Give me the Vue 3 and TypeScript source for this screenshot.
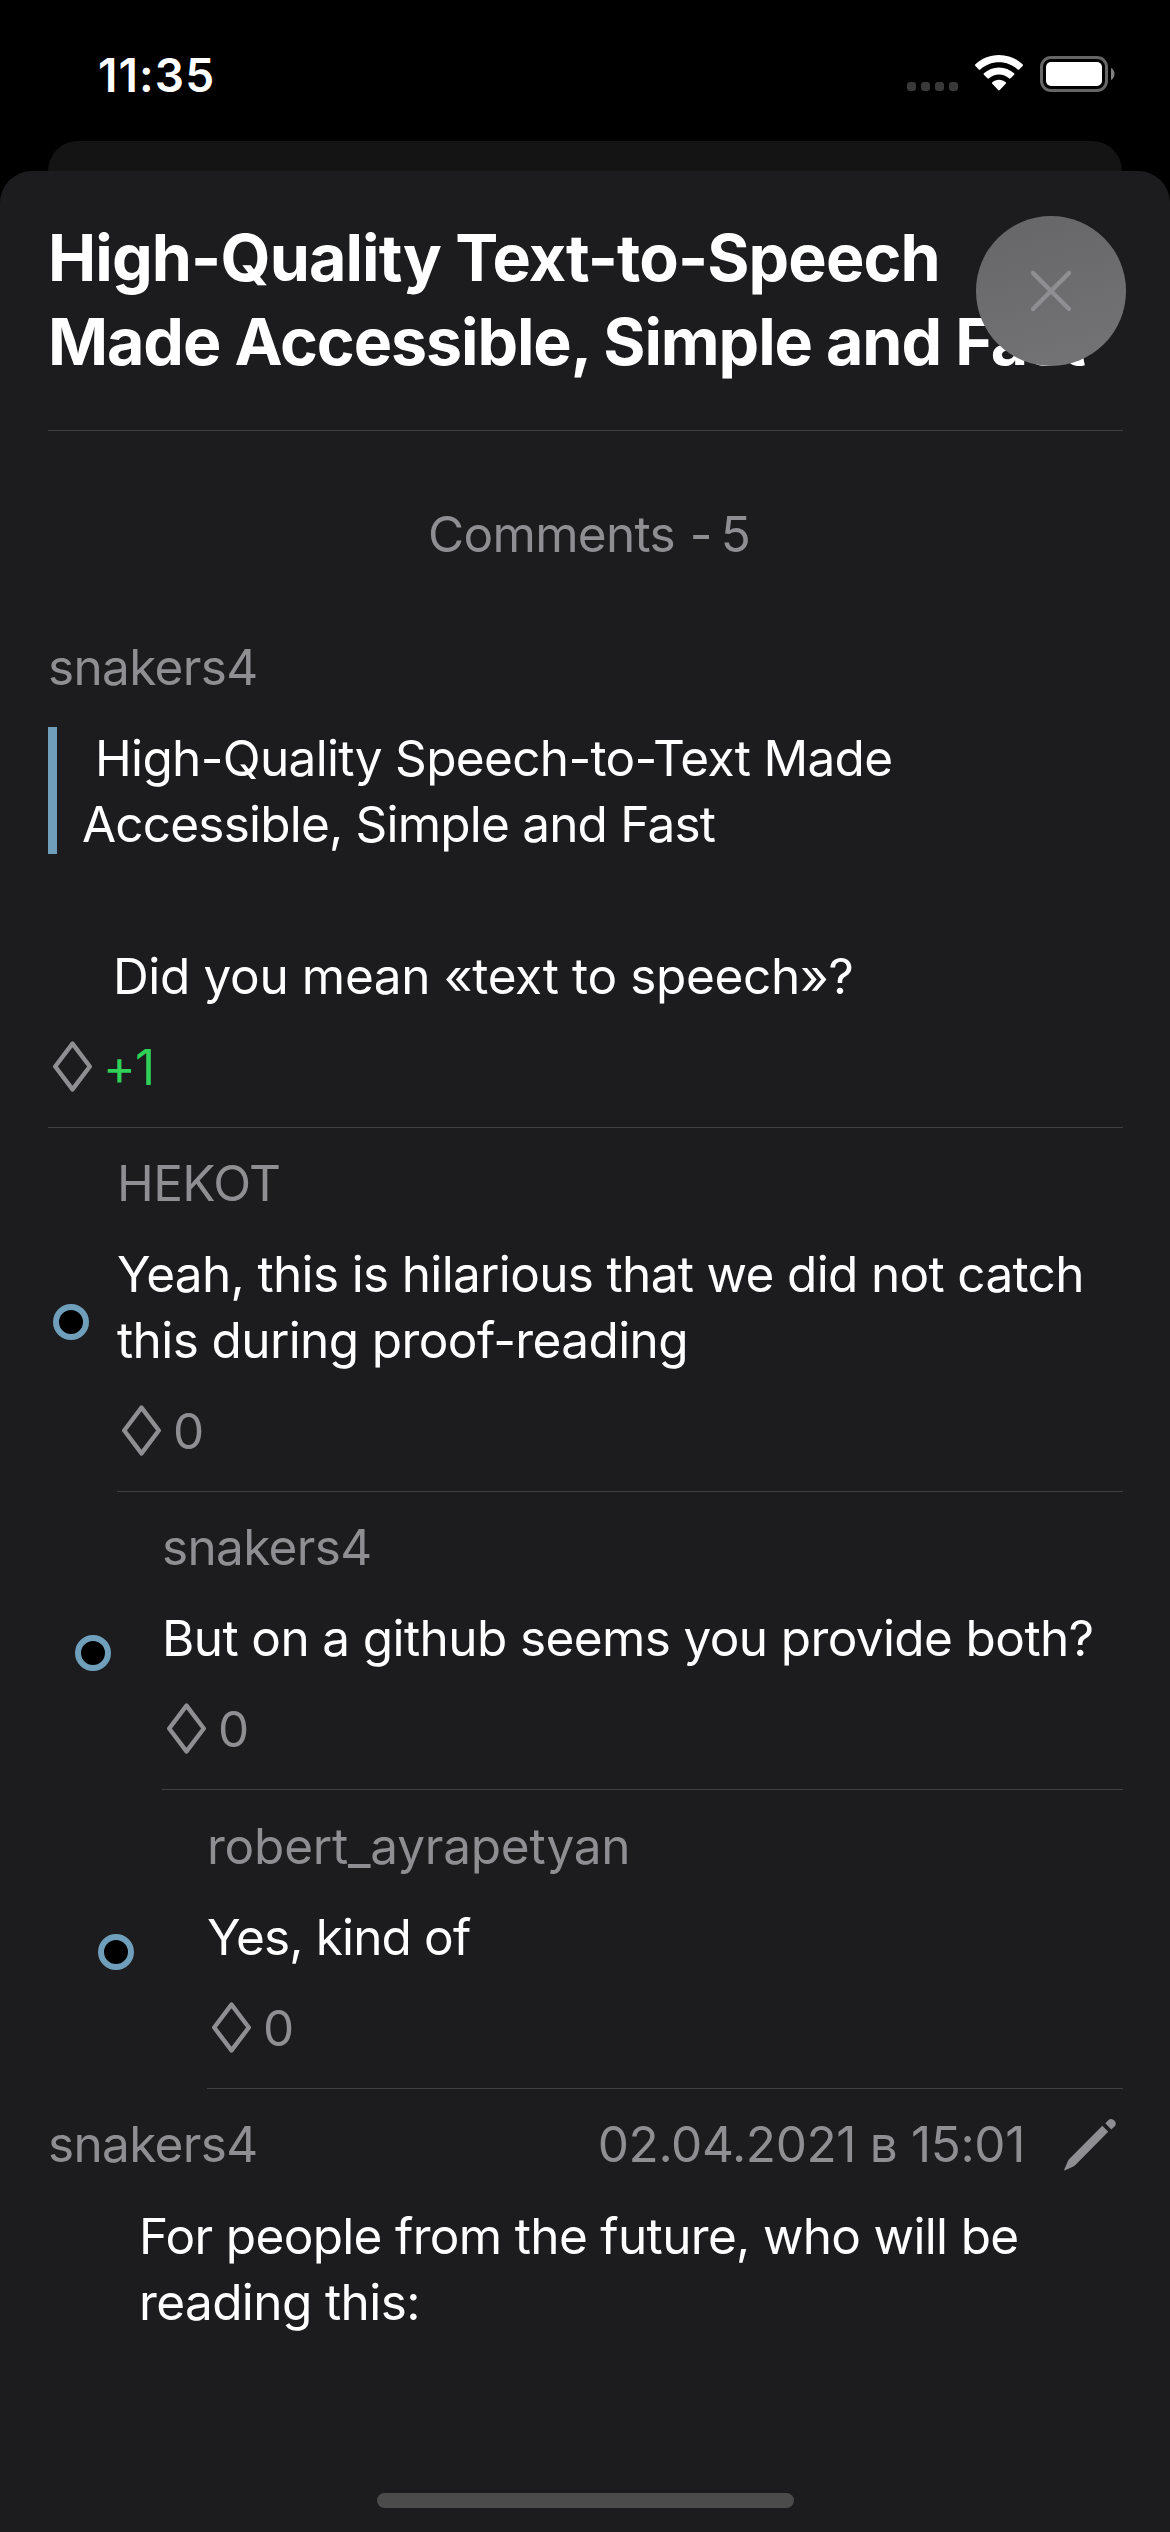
<script setup lang="ts">
interface Line {
  text: string
  tracking: number
  indent?: number
}

interface Reply {
  author: string
  authorTracking: number
  level: number
  lines: Line[]
  score: string
}

const title: Line[] = [
  { text: 'High-Quality Text-to-Speech', tracking: -0.87 },
  { text: 'Made Accessible, Simple and Fast', tracking: -1.1 },
]

const quote: Line[] = [
  { text: 'High-Quality Speech-to-Text Made', tracking: -0.68, indent: 13 },
  { text: 'Accessible, Simple and Fast', tracking: -0.8 },
]

const replies: Reply[] = [
  {
    author: 'HEKOT',
    authorTracking: -0.6,
    level: 1,
    lines: [
      { text: 'Yeah, this is hilarious that we did not catch', tracking: -0.66 },
      { text: 'this during proof-reading', tracking: -0.6 },
    ],
    score: '0',
  },
  {
    author: 'snakers4',
    authorTracking: -0.65,
    level: 2,
    lines: [{ text: 'But on a github seems you provide both?', tracking: -0.61 }],
    score: '0',
  },
  {
    author: 'robert_ayrapetyan',
    authorTracking: -0.22,
    level: 3,
    lines: [{ text: 'Yes, kind of', tracking: -0.85 }],
    score: '0',
  },
]

const latest: Line[] = [
  { text: 'For people from the future, who will be', tracking: -0.67 },
  { text: 'reading this:', tracking: -0.6 },
]

const lineStyle = (l: Line) => ({
  letterSpacing: l.tracking + 'px',
  marginLeft: (l.indent ?? 0) + 'px',
})
</script>

<template>
  <div class="screen">
    <header class="status">
      <span class="time">11:35</span>
      <div class="indicators">
        <div class="cell"><i /><i /><i /><i /></div>
        <svg class="wifi" width="48" height="36" viewBox="0 0 48 36">
          <path d="M24 0C14.800 0 6.400 3.500 0.400 9.300Q-0.400 10.100 0.400 10.900L3.800 14.400Q4.600 15.200 5.400 14.400C10.300 9.900 16.800 7.200 24 7.200S37.700 9.900 42.600 14.400Q43.400 15.200 44.200 14.400L47.600 10.900Q48.400 10.100 47.600 9.300C41.600 3.500 33.200 0 24 0Z" />
          <path d="M24 12.400C18.200 12.400 12.900 14.600 8.900 18.200Q8.100 19 8.900 19.800L12.400 23.300Q13.200 24 14 23.300C16.700 21 20.200 19.600 24 19.600S31.300 21 34 23.300Q34.800 24 35.600 23.300L39.100 19.800Q39.900 19 39.100 18.200C35.100 14.600 29.800 12.400 24 12.400Z" />
          <path d="M24 24.800C21.400 24.800 19.100 25.700 17.300 27.200Q16.500 28 17.300 28.800L23.200 35Q24 35.800 24.800 35L30.700 28.800Q31.500 28 30.700 27.200C28.900 25.700 26.600 24.800 24 24.800Z" />
        </svg>
        <svg class="battery" width="75" height="36" viewBox="0 0 75 36">
          <rect x="1.500" y="1.500" width="65" height="33" rx="9.500" fill="none" stroke="#666" stroke-width="3" />
          <rect x="6" y="6" width="56" height="24" rx="5" fill="#fff" />
          <path d="M71 12C75.700 14 75.700 22 71 24Z" fill="#808080" />
        </svg>
      </div>
    </header>

    <div class="sheet-behind" />

    <main class="sheet">
      <h1 class="title">
        <span v-for="l in title" :key="l.text" class="line" :style="lineStyle(l)">{{ l.text }}</span>
      </h1>
      <button class="close" aria-label="Close">
        <svg width="44" height="44" viewBox="0 0 44 44">
          <path d="M4 4L40 40M40 4L4 40" fill="none" stroke="#8e8e93" stroke-width="4.500" stroke-linecap="round" />
        </svg>
      </button>

      <div class="count"><span class="count-label">Comments -</span><span>5</span></div>

      <article class="root">
        <div class="author short">snakers4</div>
        <blockquote class="quote">
          <span v-for="l in quote" :key="l.text" class="line" :style="lineStyle(l)">{{ l.text }}</span>
        </blockquote>
        <p class="body question">Did you mean «text to speech»?</p>
        <div class="score">
          <svg class="diamond" width="39" height="51" viewBox="0 0 39 51">
            <path d="M19.500 2.600L36.800 25.500L19.500 48.400L2.200 25.500Z" />
          </svg>
          <span class="up">+1</span>
        </div>
      </article>

      <article v-for="r in replies" :key="r.author" :class="['reply', 'level-' + r.level]">
        <div class="gutter"><i class="dot" /></div>
        <div class="content">
          <div class="author" :style="{ letterSpacing: r.authorTracking + 'px' }">{{ r.author }}</div>
          <p class="body">
            <span v-for="l in r.lines" :key="l.text" class="line" :style="lineStyle(l)">{{ l.text }}</span>
          </p>
          <div class="score">
            <svg class="diamond" width="39" height="51" viewBox="0 0 39 51">
              <path d="M19.500 2.600L36.800 25.500L19.500 48.400L2.200 25.500Z" />
            </svg>
            <span>{{ r.score }}</span>
          </div>
        </div>
      </article>

      <article class="latest">
        <div class="meta">
          <span class="author short">snakers4</span>
          <span class="date">02.04.2021 в 15:01</span>
          <svg class="pencil" width="52" height="52" viewBox="0 0 52 52">
            <path d="M38.300 6.800L44.200 12.800L11.400 45.900Q10.200 47 8.800 47.700L1.300 51.300Q0 51.700 0.300 50.400L3.600 42.700Q4.200 41.300 5.300 40.100Z" />
            <path d="M41.300 4.200L44 1.400Q47.300 -1.400 50.300 1.600Q53.200 4.600 50.500 7.600L47.300 10.400Z" />
          </svg>
        </div>
        <p class="body">
          <span v-for="l in latest" :key="l.text" class="line" :style="lineStyle(l)">{{ l.text }}</span>
        </p>
      </article>

      <div class="home" />
    </main>
  </div>
</template>

<style>
html,
body {
  margin: 0;
  background: #000;
}
</style>

<style scoped>
.screen {
  width: 1170px;
  height: 2532px;
  overflow: hidden;
  display: flex;
  flex-direction: column;
  background: #000;
  color: #fff;
  font-family: Inter, 'Liberation Sans', sans-serif;
  font-size: 49.5px;
  line-height: 66px;
}

.status {
  height: 141px;
  box-sizing: border-box;
  padding: 42px 55px 0 98px;
  display: flex;
  justify-content: space-between;
}

.time {
  font-size: 46px;
  font-weight: 600;
  letter-spacing: 1.1px;
}

.indicators {
  display: flex;
  align-items: flex-end;
  height: 50px;
}

.cell {
  display: flex;
  gap: 5px;
  margin: 0 17px 1px 0;
}

.cell i {
  width: 9px;
  height: 9px;
  border-radius: 3px;
  background: #393939;
}

.wifi {
  fill: #fff;
  margin: 0 17px 1px 0;
}

.sheet-behind {
  flex: none;
  height: 30px;
  margin: 0 48px;
  border-radius: 30px 30px 0 0;
  background: #141414;
}

.sheet {
  position: relative;
  flex: 1;
  display: flex;
  flex-direction: column;
  padding: 45px 47px 0 48px;
  border-radius: 32px 32px 0 0;
  background: #1c1c1e;
}

.title {
  margin: 0;
  padding-bottom: 46px;
  border-bottom: 1px solid #414144;
  font-size: 64.5px;
  font-weight: 700;
  line-height: 84px;
}

.line {
  display: block;
  white-space: nowrap;
}

.close {
  position: absolute;
  top: 45px;
  right: 44px;
  width: 150px;
  height: 150px;
  padding: 0;
  border: 0;
  border-radius: 50%;
  display: flex;
  align-items: center;
  justify-content: center;
  background: linear-gradient(165deg, #666668, #747476);
}

.count {
  display: flex;
  justify-content: center;
  gap: 9px;
  padding: 70px 0 67px 8px;
  color: #8e8e93;
}

.count-label {
  letter-spacing: -0.7px;
  word-spacing: 1.5px;
}

.author,
.date,
.score {
  color: #8e8e93;
  white-space: nowrap;
}

.short {
  letter-spacing: -0.65px;
}

.root {
  display: flex;
  flex-direction: column;
  gap: 25px;
  padding-bottom: 27px;
  border-bottom: 1px solid #414144;
}

.quote {
  position: relative;
  margin: 0;
  padding-left: 34px;
}

.quote::before {
  content: '';
  position: absolute;
  left: 0;
  top: 2px;
  width: 9px;
  height: 127px;
  background: #6f9fbb;
}

.body {
  margin: 0;
}

.question {
  margin: 61px 0 0 65px;
  letter-spacing: -0.35px;
  white-space: nowrap;
}

.score {
  display: flex;
  padding-left: 5px;
}

.diamond {
  margin: 7px 12px 0 0;
  fill: none;
  stroke: #8e8e93;
  stroke-width: 4.4;
  stroke-linejoin: round;
}

.up {
  margin-left: -1px;
  letter-spacing: -0.8px;
  color: #30d158;
}

.reply {
  display: flex;
}

.gutter {
  flex: none;
  display: flex;
  align-items: center;
  padding-top: 24px;
  box-sizing: border-box;
}

.level-1 .gutter {
  width: 69px;
  padding-left: 5px;
}

.level-2 .gutter {
  width: 114px;
  padding-left: 27px;
}

.level-3 .gutter {
  width: 159px;
  padding-left: 50px;
}

.dot {
  width: 36px;
  height: 36px;
  box-sizing: border-box;
  border: 6px solid #6f9fbb;
  border-radius: 50%;
  background: #000;
}

.content {
  flex: 1;
  display: flex;
  flex-direction: column;
  gap: 25px;
  padding: 22px 0 27px;
  border-bottom: 1px solid #414144;
}

.level-3 .content {
  padding-top: 23px;
}

.latest {
  padding-top: 22px;
  display: flex;
  flex-direction: column;
  gap: 26px;
}

.latest .body {
  padding-left: 91px;
}

.meta {
  display: flex;
}

.date {
  margin-left: auto;
  letter-spacing: -0.35px;
}

.pencil {
  margin: 8px 7px 0 39px;
  fill: #8e8e93;
}

.home {
  width: 417px;
  height: 15px;
  margin: auto auto 24px;
  border-radius: 8px;
  background: #4b4b4b;
}
</style>
